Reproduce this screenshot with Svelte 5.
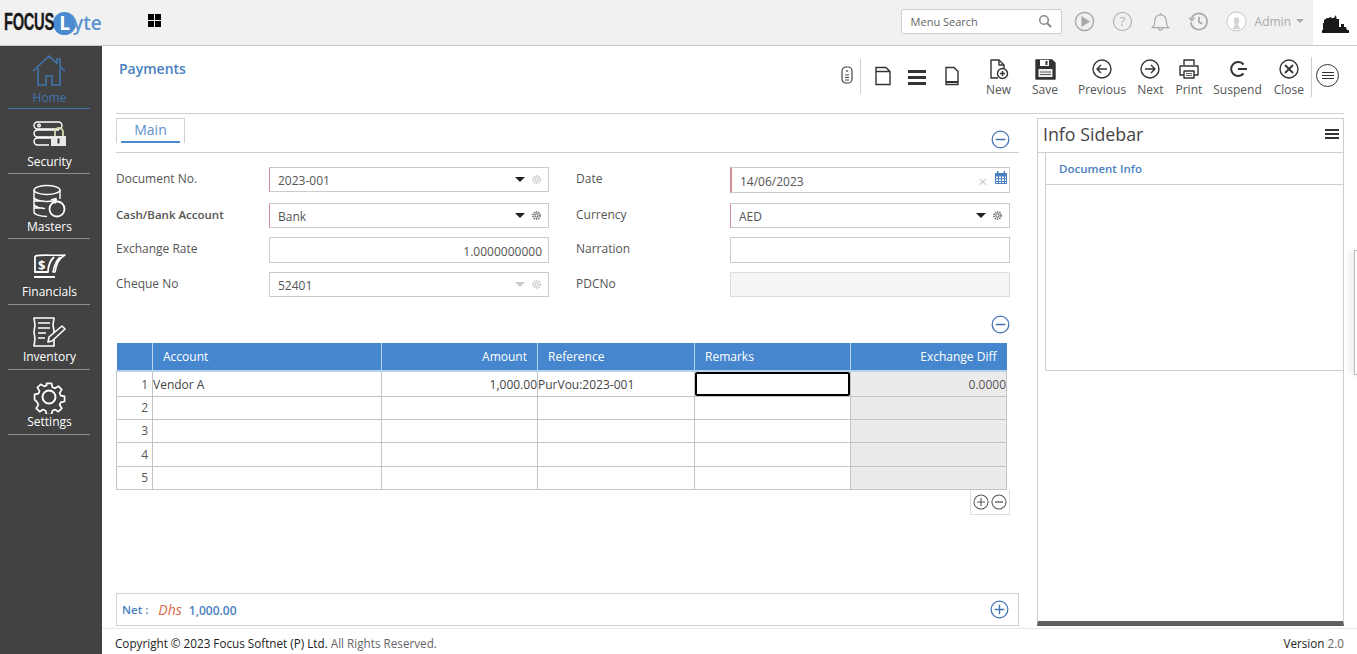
<script>
  const navItems = [
    { name: 'Home', icon: 'home', active: true },
    { name: 'Security', icon: 'security' },
    { name: 'Masters', icon: 'masters' },
    { name: 'Financials', icon: 'financials' },
    { name: 'Inventory', icon: 'inventory' },
    { name: 'Settings', icon: 'settings' }
  ];

  const tools = [
    { name: 'New', icon: 'new' },
    { name: 'Save', icon: 'save', gap: 'wide' },
    { name: 'Previous', icon: 'prev', gap: 'mid' },
    { name: 'Next', icon: 'next', gap: 'tight' },
    { name: 'Print', icon: 'print' },
    { name: 'Suspend', icon: 'suspend', gap: 'tight' },
    { name: 'Close', icon: 'close' }
  ];

  const rows = [
    { n: 1, account: 'Vendor A', amount: '1,000.00', reference: 'PurVou:2023-001', diff: '0.0000' },
    { n: 2 },
    { n: 3 },
    { n: 4 },
    { n: 5 }
  ];
</script>

{#snippet gear(color)}
  <svg class="gear" viewBox="0 0 12 12" fill="none" stroke={color} stroke-width="1.1">
    <circle cx="6" cy="6" r="1.8" />
    <circle cx="6" cy="6" r="3.9" stroke-dasharray="1.6 0.9" stroke-width="1.7" />
  </svg>
{/snippet}

{#snippet minus(cls)}
  <svg class={cls} viewBox="0 0 20 20" fill="none" stroke="currentColor" stroke-width="1.3">
    <circle cx="10" cy="10" r="8.8" />
    <path d="M5 10h10" stroke-width="1.6" />
  </svg>
{/snippet}

{#snippet plus(cls)}
  <svg class={cls} viewBox="0 0 20 20" fill="none" stroke="currentColor" stroke-width="1.3">
    <circle cx="10" cy="10" r="8.8" />
    <path d="M5 10h10M10 5v10" stroke-width="1.4" />
  </svg>
{/snippet}

{#snippet navIcon(icon)}
  <svg class="nav-icon" viewBox="0 0 36 34" fill="none" stroke="currentColor" stroke-width="1.4" stroke-linejoin="round">
    {#if icon === 'home'}
      <path d="M2 17 18 2l8 7.500V5h3v7.500L34 17" stroke-width="1.6" />
      <path d="M7 14v17h8v-9h6v9h8V14" stroke-width="1.6" />
    {:else if icon === 'security'}
      <rect x="3" y="3" width="28" height="7" rx="3.500" />
      <path d="M22 18H6.500a3.500 3.500 0 0 1 0-7H28M18 26H6.500a3.500 3.500 0 0 1 0-7H20" />
      <circle cx="8" cy="6.500" r="1.300" />
      <path d="M24 17v-4a4 4 0 0 1 8 0v4" stroke="#d8d8b0" stroke-width="1.800" />
      <rect x="20" y="17" width="15" height="10" fill="#e8e8e8" stroke="none" />
      <path d="M27.500 19.500v5" stroke="#333" stroke-width="2" />
    {:else if icon === 'masters'}
      <ellipse cx="16" cy="6" rx="13" ry="4.500" />
      <path d="M3 6v22c0 2.500 6 4.500 13 4.500M29 6v9M3 13c0 2.500 6 4.500 13 4.500 4 0 8-.6 10-1.800M3 20c0 2.500 6 4.500 11 4.500M3 17h10M3 24h9" />
      <circle cx="26" cy="25" r="7.500" stroke-width="1.800" />
      <path d="m20 16 5-1.500-1 5" stroke-width="1.600" />
    {:else if icon === 'financials'}
      <path d="M4 6c8-2 20 0 30-1-6 3-9 10-10 17h-2c1-6 3-11 7-15" stroke-width="1.600" />
      <path d="M4 6v16h13c0-6 2-11 6-15" stroke-width="1.800" />
      <path d="M3 27h21" stroke-width="2" />
      <text x="7" y="20" class="dollar">$</text>
    {:else if icon === 'inventory'}
      <path d="M3 3h20l-1 7 1 6v15H3l1-7-1-7 1-7z" stroke-width="1.600" />
      <path d="M7 8h12M7 13h12M7 18h8M7 23h7" stroke-width="1.600" />
      <path d="m17 27 1-5L31 11l3 3-13 12z" fill="#424242" stroke-width="1.600" />
    {:else}
      <path d="M15 2h6l1 4.500 3 1.300 4-2.500 4 4-2.500 4 1.300 3 4.500 1v6l-4.500 1-1.300 3 2.500 4-4 4-4-2.500-3 1.300-1 4.500h-6l-1-4.500-3-1.300-4 2.500-4-4 2.500-4-1.300-3L1 21v-6l4.500-1 1.300-3-2.500-4 4-4 4 2.500 3-1.300z" transform="scale(.85) translate(3.200 2)" stroke-width="2" />
      <circle cx="18" cy="17" r="6.500" stroke-width="2" />
    {/if}
  </svg>
{/snippet}

{#snippet toolIcon(icon)}
  <svg class="tool-icon" viewBox="0 0 24 24" fill="none" stroke="#333" stroke-width="1.400" stroke-linejoin="round">
    {#if icon === 'new'}
      <path d="M12 21H5V3h8l5 5v3" />
      <path d="M13 3v5h5" />
      <circle cx="16.500" cy="16.500" r="5" />
      <path d="M14 16.500h5M16.500 14v5" />
    {:else if icon === 'save'}
      <path d="M3 3h16l3 3v16H3z" fill="#333" />
      <rect x="7" y="3" width="9" height="6" fill="#fff" stroke="none" />
      <rect x="12.500" y="4" width="2" height="4" fill="#333" stroke="none" />
      <rect x="5.500" y="12" width="14" height="8" fill="#eee" stroke="none" />
      <path d="M7 15h11M7 17.500h11" stroke-width=".8" />
    {:else if icon === 'prev'}
      <circle cx="12" cy="12" r="9" />
      <path d="M7 12h10M11 8l-4 4 4 4" />
    {:else if icon === 'next'}
      <circle cx="12" cy="12" r="9" />
      <path d="M7 12h10M13 8l4 4-4 4" />
    {:else if icon === 'print'}
      <path d="M7 8V3h10v5M7 18H3V9h18v9h-4" />
      <rect x="7" y="14" width="10" height="7" />
      <path d="M9 16.500h6M9 18.500h6" stroke-width=".8" />
    {:else if icon === 'suspend'}
      <path d="M17.500 7.500a7 7 0 1 0 0 9" stroke-width="2" />
      <path d="M12 12h9" stroke-width="2" />
    {:else}
      <circle cx="12" cy="12" r="9" />
      <path d="m8 8 8 8M16 8l-8 8" stroke-width="1.800" />
    {/if}
  </svg>
{/snippet}

<div class="shell">
  <header class="topbar">
    <div class="logo">
      <span class="brand">FOCUS</span>
      <span class="logo-l">L</span>
      <span class="yte">yte</span>
    </div>
    <div class="apps"><i></i><i></i><i></i><i></i></div>

    <div class="top-right">
      <div class="search">
        <span>Menu Search</span>
        <svg viewBox="0 0 14 14" fill="none" stroke="#8c8c8c" stroke-width="1.600"><circle cx="6" cy="6" r="4.300" /><path d="m9.200 9.200 3.800 3.800" stroke-width="2" /></svg>
      </div>
      <svg class="top-icon" viewBox="0 0 22 22" fill="none" stroke="#a9a9a9" stroke-width="1.500"><circle cx="11" cy="11" r="9.500" /><path d="M8.500 6.500v9l7-4.500z" fill="#a9a9a9" /></svg>
      <svg class="top-icon" viewBox="0 0 22 22" fill="none" stroke="#b5b5b5" stroke-width="1.300"><circle cx="11" cy="11" r="9.500" /><text x="11" y="15.500" class="qmark">?</text></svg>
      <svg class="top-icon" viewBox="0 0 22 22" fill="none" stroke="#a9a9a9" stroke-width="1.300"><path d="M2.500 17.500c2-2 2.500-3.500 2.500-7 0-4 2.500-6.500 6-6.500s6 2.500 6 6.500c0 3.500.5 5 2.500 7z" /><path d="M9 18a2 2 0 0 0 4 0M11 4V2" /></svg>
      <svg class="top-icon" viewBox="0 0 22 22" fill="none" stroke="#a9a9a9" stroke-width="1.800"><path d="M3.500 8a8.500 8.500 0 1 1-.5 4" /><path d="m1 7 3 3 3-3" stroke-width="1.500" /><path d="M11.500 6v5.500l3.500 2" /></svg>
      <svg class="top-icon" viewBox="0 0 22 22" fill="none" stroke="#c4c4c4" stroke-width="1"><circle cx="11" cy="11" r="10" fill="#fff" /><path d="M7 19c1-3 2-3.500 2.500-5-1.500-1.500-2-5-.5-7 1-1 3-1 4 0 1.500 2 1 5.500-.5 7 .5 1.500 1.500 2 2.500 5z" fill="#d4d4d4" stroke="none" /></svg>
      <span class="admin">Admin</span>
      <span class="caret"></span>
      <div class="company">
        <svg viewBox="0 0 29 18" fill="#1a1a1a"><path d="M1 18v-3h1V8h1V5l3-2h2l1-1 2 1h2l2-3 .6 4H18v8h2V9h3v3h2l1 3h2v3z" /></svg>
      </div>
    </div>
  </header>

  <div class="body">
    <nav class="sidebar">
      {#each navItems as item}
        <div class="nav-item" class:active={item.active}>
          {@render navIcon(item.icon)}
          <span>{item.name}</span>
        </div>
      {/each}
    </nav>

    <main class="main">
      <div class="page">
        <div class="title-row">
          <h1>Payments</h1>
          <div class="toolbar">
            <svg class="mouse" viewBox="0 0 12 18" fill="none" stroke="#444" stroke-width="1.200"><rect x="1" y="1" width="10" height="16" rx="4" /><path d="M6 4v2M4 9h4M4 11.500h4M4 14h4" /></svg>
            <span class="divider"></span>
            <svg class="plain" viewBox="0 0 18 20" fill="none" stroke="#333" stroke-width="1.400"><path d="M2 1.500h10l4 4v13H2zM2 5.500h14" /></svg>
            <div class="bars"><i></i><i></i><i></i></div>
            <svg class="plain doc" viewBox="0 0 18 20" fill="none" stroke="#333" stroke-width="1.400"><path d="M3 1.500h8l4 4v13H3z" /><path d="M3 16h12" stroke-width="2" /></svg>
            {#each tools as tool}
              <div class="tool {tool.gap ?? ''}">
                {@render toolIcon(tool.icon)}
                <span>{tool.name}</span>
              </div>
            {/each}
            <span class="divider end"></span>
            <div class="menu-btn"><i></i><i></i><i></i></div>
          </div>
        </div>

        <div class="columns">
          <section class="left">
            <div class="tabs">
              <div class="tab"><div class="tab-label">Main</div></div>
              {@render minus('round blue')}
            </div>

            <div class="form">
              <span class="lbl">Document No.</span>
              <div class="field req"><span>2023-001</span><b class="arrow"></b>{@render gear('#c4c4c4')}</div>
              <span class="lbl second">Date</span>
              <div class="field req strong date">
                <span>14/06/2023</span>
                <em class="clear">×</em>
                <svg class="cal" viewBox="0 0 14 14" fill="#4a7fc0"><path d="M1 2h12v11H1zM2 5.500v1.800h2V5.500zm3 0v1.800h2V5.500zm3 0v1.800h2V5.500zm3 0v1.800h1V5.500zM2 8.200V10h2V8.200zm3 0V10h2V8.200zm3 0V10h2V8.200zm3 0V10h1V8.200zM2 11v1h2v-1zm3 0v1h2v-1zm3 0v1h2v-1zm3 0v1h1v-1z" fill-rule="evenodd" /><path d="M3 0h1.500v3H3zM9.500 0H11v3H9.500z" /></svg>
              </div>

              <span class="lbl bold">Cash/Bank Account</span>
              <div class="field req"><span>Bank</span><b class="arrow"></b>{@render gear('#666')}</div>
              <span class="lbl second">Currency</span>
              <div class="field req"><span>AED</span><b class="arrow"></b>{@render gear('#666')}</div>

              <span class="lbl">Exchange Rate</span>
              <div class="field tall right"><span>1.0000000000</span></div>
              <span class="lbl second">Narration</span>
              <div class="field tall"></div>

              <span class="lbl">Cheque No</span>
              <div class="field"><span>52401</span><b class="arrow faint"></b>{@render gear('#c4c4c4')}</div>
              <span class="lbl second">PDCNo</span>
              <div class="field disabled"></div>
            </div>

            <div class="grid-head">{@render minus('round blue')}</div>

            <table>
              <thead>
                <tr>
                  <th class="c-n"></th>
                  <th class="c-a">Account</th>
                  <th class="c-b num">Amount</th>
                  <th class="c-c">Reference</th>
                  <th class="c-d">Remarks</th>
                  <th class="c-e num">Exchange Diff</th>
                </tr>
              </thead>
              <tbody>
                {#each rows as row}
                  <tr>
                    <td class="idx">{row.n}</td>
                    <td>{row.account ?? ''}</td>
                    <td class="val">{row.amount ?? ''}</td>
                    <td>{row.reference ?? ''}</td>
                    <td class="remarks">
                      {#if row.n === 1}<div class="cell-focus"></div>{/if}
                    </td>
                    <td class="val locked">{row.diff ?? ''}</td>
                  </tr>
                {/each}
              </tbody>
            </table>

            <div class="row-tools">
              <div class="row-btns">
                {@render plus('mini')}
                {@render minus('mini')}
              </div>
            </div>

            <div class="net">
              <span class="net-label">Net :</span>
              <span class="dhs">Dhs</span>
              <span class="net-val">1,000.00</span>
              {@render plus('round blue push')}
            </div>
          </section>

          <aside class="info">
            <div class="info-head">
              <span>Info Sidebar</span>
              <div class="info-menu"><i></i><i></i><i></i></div>
            </div>
            <div class="info-body">
              <div class="info-title">Document Info</div>
            </div>
          </aside>
        </div>
      </div>

      <footer class="footer">
        <span><strong>Copyright © 2023 Focus Softnet (P) Ltd.</strong> All Rights Reserved.</span>
        <span><strong>Version</strong> 2.0</span>
      </footer>
      <div class="handle"></div>
    </main>
  </div>
</div>

<style>
  :global(body) {
    margin: 0;
    background: #fff;
    font-family: "Open Sans", sans-serif;
    overflow: hidden;
  }

  .shell {
    width: 1357px;
    height: 654px;
    display: flex;
    flex-direction: column;
    overflow: hidden;
    color: #555;
    font-size: 12px;
  }

  /* top bar */
  .topbar {
    height: 45px;
    flex: none;
    display: flex;
    align-items: center;
    background: #f1f1f1;
    border-bottom: 1px solid #c8c8c8;
  }

  .logo {
    width: 148px;
    padding-left: 4px;
    box-sizing: border-box;
    display: flex;
    align-items: center;
    height: 45px;
    flex: none;
  }

  .brand {
    font-family: "Liberation Sans", sans-serif;
    font-weight: 700;
    font-size: 23px;
    color: #1a1a1a;
    display: inline-block;
    width: 48px;
    transform: scaleX(0.64);
    transform-origin: left center;
    letter-spacing: -0.5px;
    margin-right: 1px;
    -webkit-text-stroke: 0.3px #1a1a1a;
  }

  .logo-l {
    width: 23px;
    height: 23px;
    margin-top: 1px;
    border-radius: 50%;
    background: #4a8ad0;
    color: #fff;
    font-weight: 700;
    font-size: 19px;
    line-height: 23px;
    text-align: center;
    flex: none;
  }

  .yte {
    font-size: 19px;
    font-weight: 600;
    color: #5b93cf;
    margin-left: -3px;
  }

  .apps {
    display: grid;
    grid-template-columns: 6px 6px;
    gap: 1px;
    margin-top: -5px;
  }

  .apps i {
    height: 6px;
    background: #000;
  }

  .top-right {
    margin-left: auto;
    display: flex;
    align-items: center;
    height: 45px;
  }

  .search {
    width: 161px;
    height: 25px;
    box-sizing: border-box;
    margin-top: -3px;
    padding: 0 9px;
    display: flex;
    align-items: center;
    justify-content: space-between;
    background: #fff;
    border: 1px solid #cfcfcf;
    border-radius: 2px;
    font-size: 11px;
    color: #666;
    margin-right: 12px;
  }

  .search svg {
    width: 14px;
    height: 14px;
  }

  .top-icon {
    width: 21px;
    height: 21px;
    margin: -3px 17px 0 0;
  }

  .qmark {
    font-size: 14px;
    text-anchor: middle;
    fill: #b5b5b5;
    stroke: none;
    font-family: "Open Sans", sans-serif;
  }

  .admin {
    margin: -3px 5px 0 -9px;
    color: #a9a9a9;
    font-size: 12px;
  }

  .caret {
    border: 4px solid transparent;
    border-top-color: #a9a9a9;
    margin-right: 9px;
    margin-top: 1px;
  }

  .company {
    width: 44px;
    height: 45px;
    background: #fff;
    display: flex;
    align-items: center;
    justify-content: center;
  }

  .company svg {
    width: 29px;
    height: 18px;
    margin-top: 3px;
  }

  .body {
    flex: 1;
    display: flex;
    min-height: 0;
  }

  /* left nav */
  .sidebar {
    width: 102px;
    flex: none;
    background: #424242;
    padding-top: 6px;
    box-sizing: border-box;
  }

  .nav-item {
    height: 57px;
    margin: 0 12px 8.200px 8px;
    width: 82px;
    box-sizing: border-box;
    display: flex;
    flex-direction: column;
    align-items: center;
    color: #fff;
    border-bottom: 1px solid #8e8e8e;
  }

  .nav-item span {
    font-size: 12px;
    line-height: 16px;
    margin-top: 0.400px;
    padding-left: 1px;
  }

  .nav-item.active {
    color: #3f74ad;
    border-bottom-color: #3f74ad;
  }

  .nav-item.active span {
    margin-top: 2px;
  }

  .nav-icon {
    width: 36px;
    height: 34px;
    margin-top: 2px;
  }

  .dollar {
    font-size: 13px;
    font-weight: 700;
    fill: #fff;
    stroke: none;
    font-family: "Open Sans", sans-serif;
  }

  /* main */
  .main {
    flex: 1;
    min-width: 0;
    display: flex;
    flex-direction: column;
    position: relative;
  }

  .page {
    flex: 1;
    min-height: 0;
    padding: 0 13px 0 14px;
    display: flex;
    flex-direction: column;
  }

  .title-row {
    height: 68px;
    flex: none;
    box-sizing: border-box;
    border-bottom: 1px solid #cfcfcf;
    display: flex;
    justify-content: space-between;
  }

  h1 {
    margin: 13px 0 0 3px;
    font-size: 14px;
    font-weight: 600;
    color: #4a7fc0;
  }

  .toolbar {
    display: flex;
    align-items: flex-start;
    margin-right: 5px;
    padding-top: 11px;
  }

  .tool {
    display: flex;
    flex-direction: column;
    align-items: center;
    margin-left: 12px;
    color: #555;
  }

  .tool.wide {
    margin-left: 21px;
  }

  .tool.mid {
    margin-left: 20px;
  }

  .tool.tight {
    margin-left: 11px;
  }

  .tool span {
    line-height: 17px;
  }

  .tool-icon {
    width: 24px;
    height: 24px;
  }

  .mouse {
    width: 12px;
    height: 18px;
    margin-top: 9px;
  }

  .divider {
    width: 1px;
    height: 35px;
    background: #cfcfcf;
    margin: 2px 0 0 7px;
  }

  .divider.end {
    margin: 0 4px 0 7px;
    height: 40px;
  }

  .plain {
    width: 18px;
    height: 20px;
    margin: 9px 0 0 13px;
  }

  .plain.doc {
    margin-left: 17px;
    margin-right: 13px;
  }

  .bars {
    width: 18px;
    margin: 13px 0 0 16px;
    display: flex;
    flex-direction: column;
    gap: 3px;
  }

  .bars i {
    height: 3px;
    background: #333;
  }

  .menu-btn {
    width: 23px;
    height: 23px;
    border: 1px solid #333;
    border-radius: 50%;
    box-sizing: border-box;
    margin-top: 7px;
    display: flex;
    flex-direction: column;
    align-items: center;
    justify-content: center;
    gap: 2px;
  }

  .menu-btn i {
    width: 12px;
    height: 1px;
    background: #333;
  }

  .columns {
    flex: 1;
    min-height: 0;
    display: flex;
    gap: 18px;
  }

  .left {
    width: 903px;
    flex: none;
    display: flex;
    flex-direction: column;
  }

  .tabs {
    height: 39px;
    flex: none;
    box-sizing: border-box;
    border-bottom: 1px solid #cfcfcf;
    display: flex;
    align-items: flex-start;
    justify-content: space-between;
    padding: 4px 9px 0 0;
  }

  .tab {
    width: 69px;
    height: 25px;
    box-sizing: border-box;
    border: 1px solid #d2d2d2;
    border-bottom: none;
    padding: 0 4px;
  }

  .tab-label {
    height: 24px;
    box-sizing: border-box;
    border-bottom: 2px solid #4a8ad0;
    text-align: center;
    font-size: 14px;
    line-height: 22px;
    color: #5f8fd0;
  }

  .round {
    width: 19px;
    height: 19px;
    margin-top: 12px;
  }

  .blue {
    color: #3f74b5;
  }

  .form {
    display: grid;
    grid-template-columns: 153px 280px 181px 280px;
    grid-template-rows: 36px 34px 35px 25px;
    align-items: start;
    padding-top: 14px;
    flex: none;
  }

  .lbl {
    font-size: 12px;
    line-height: 16px;
    color: #555;
    margin-top: 4px;
  }

  .lbl.second {
    padding-left: 27px;
  }

  .lbl.bold {
    font-size: 11.500px;
    font-weight: 600;
  }

  .field {
    height: 25px;
    box-sizing: border-box;
    border: 1px solid #cbcbcb;
    display: flex;
    align-items: center;
    padding: 2px 6px 0 8px;
    color: #555;
    font-size: 12px;
  }

  .field > span {
    flex: 1;
  }

  .field.req {
    border-left-color: #d58f98;
  }

  .field.strong {
    border-left-width: 2px;
  }

  .field.date {
    height: 26px;
    padding-right: 1px;
  }

  .field.tall {
    height: 26px;
  }

  .field.right {
    text-align: right;
  }

  .field.disabled {
    background: #f5f5f5;
    border-color: #dcdcdc;
  }

  .arrow {
    width: 0;
    height: 0;
    border: 5px solid transparent;
    border-top: 5px solid #222;
    border-bottom: none;
    margin: -2px 6px 0 0;
  }

  .arrow.faint {
    border-top-color: #c8c8c8;
  }

  .gear {
    width: 11px;
    height: 11px;
    margin-top: -2px;
  }

  .clear {
    font-style: normal;
    font-size: 15px;
    line-height: 15px;
    color: #c8c8c8;
    margin-right: 7px;
  }

  .cal {
    width: 14px;
    height: 14px;
    margin-top: -6px;
  }

  .grid-head {
    height: 46px;
    flex: none;
    display: flex;
    justify-content: flex-end;
    padding-right: 9px;
  }

  .grid-head .round {
    margin-top: 18px;
  }

  table {
    border-collapse: collapse;
    table-layout: fixed;
    width: 890px;
    flex: none;
    color: #444;
    font-size: 12px;
  }

  th {
    height: 28px;
    padding: 0 10px;
    background: #4586ce;
    color: #fff;
    font-weight: 400;
    text-align: left;
    border-right: 1px solid #b8d3ee;
    border-bottom: 2px solid #b8d3ee;
    box-sizing: border-box;
  }

  th:last-child {
    border-right: none;
  }

  th.num {
    text-align: right;
  }

  .c-n { width: 36px; }
  .c-a { width: 229px; }
  .c-b { width: 156px; }
  .c-c { width: 157px; }
  .c-d { width: 156px; }
  .c-e { width: 156px; }

  td {
    height: 23px;
    padding: 0;
    border: 1px solid #c4c4c4;
    box-sizing: border-box;
    line-height: 14px;
  }

  tbody tr:first-child td {
    height: 25px;
    border-top: none;
  }

  tbody tr:first-child td:not(.remarks) {
    padding-top: 2px;
  }

  tbody tr:nth-child(4) td {
    height: 24px;
  }

  td.idx {
    text-align: right;
    padding-right: 4px;
    color: #555;
  }

  td.val {
    text-align: right;
  }

  td.locked {
    background: #ebebeb;
    color: #555;
  }

  .cell-focus {
    height: 24px;
    box-sizing: border-box;
    border: 2px solid #000;
    border-radius: 2px;
  }

  .row-tools {
    width: 894px;
    flex: none;
    display: flex;
    justify-content: flex-end;
  }

  .row-btns {
    width: 40px;
    height: 25px;
    box-sizing: border-box;
    border: 1px solid #dcdcdc;
    border-top: none;
    display: flex;
    align-items: center;
    justify-content: center;
    gap: 2px;
    color: #555;
  }

  .mini {
    width: 16px;
    height: 16px;
  }

  .net {
    margin-top: auto;
    margin-bottom: 2px;
    height: 33px;
    flex: none;
    box-sizing: border-box;
    border: 1px solid #d2d2d2;
    display: flex;
    align-items: center;
    padding: 0 9px 0 5px;
    color: #4a7fc0;
    font-weight: 600;
    font-size: 11.500px;
  }

  .dhs {
    font-style: italic;
    font-weight: 400;
    color: #d9694a;
    font-size: 14px;
    margin: 0 7px 0 10px;
  }

  .net-val {
    font-size: 12px;
    margin-top: 1px;
  }

  .round.push {
    margin: 0 0 0 auto;
  }

  /* info sidebar */
  .info {
    width: 307px;
    flex: none;
    margin: 4px 0 2px;
    box-sizing: border-box;
    border: 1px solid #cfcfcf;
    border-bottom: 5px solid #5f5f5f;
    display: flex;
    flex-direction: column;
  }

  .info-head {
    height: 34px;
    flex: none;
    box-sizing: border-box;
    border-bottom: 1px solid #cfcfcf;
    display: flex;
    align-items: center;
    justify-content: space-between;
    padding: 0 4px 3px 5px;
    font-size: 17.800px;
    color: #444;
  }

  .info-menu {
    display: flex;
    flex-direction: column;
    gap: 2px;
    width: 14px;
  }

  .info-menu i {
    height: 2px;
    background: #333;
  }

  .info-body {
    margin-left: 7px;
    height: 218px;
    box-sizing: border-box;
    border-left: 1px solid #cfcfcf;
    border-bottom: 1px solid #cfcfcf;
  }

  .info-title {
    height: 32px;
    box-sizing: border-box;
    border-bottom: 1px solid #cfcfcf;
    padding-left: 13px;
    line-height: 31px;
    font-size: 11.500px;
    font-weight: 600;
    color: #4a7fc0;
  }

  .footer {
    height: 26px;
    flex: none;
    box-sizing: border-box;
    border-top: 1px solid #e8e8e8;
    display: flex;
    align-items: center;
    justify-content: space-between;
    padding: 3px 13px 0;
    color: #666;
    font-size: 11.700px;
  }

  .footer strong {
    font-weight: 400;
    color: #222;
  }

  .handle {
    position: absolute;
    right: 0;
    top: 204px;
    width: 2px;
    height: 123px;
    border: 1px solid #bbb;
    border-right: none;
    box-shadow: -3px 0 6px rgba(0, 0, 0, 0.15);
  }
</style>
